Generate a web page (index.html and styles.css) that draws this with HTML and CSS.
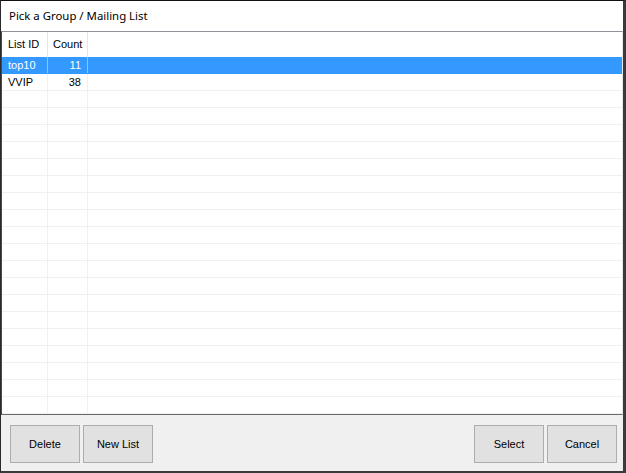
FILE: index.html
```html
<!DOCTYPE html>
<html>
<head>
<meta charset="utf-8">
<link rel="stylesheet" href="styles.css">
</head>
<body>
<div class="window">
  <div class="titlebar">Pick a Group / Mailing List</div>
  <div class="listview">
    <div class="row header">
      <div class="cell c1">List ID</div>
      <div class="cell c2">Count</div>
      <div class="cell c3"></div>
    </div>
    <div class="row selected">
      <div class="cell c1">top10</div>
      <div class="cell c2 num">11</div>
      <div class="cell c3"></div>
    </div>
    <div class="row">
      <div class="cell c1">VVIP</div>
      <div class="cell c2 num">38</div>
      <div class="cell c3"></div>
    </div>
    <div class="row"><div class="cell c1"></div><div class="cell c2"></div><div class="cell c3"></div></div>
    <div class="row"><div class="cell c1"></div><div class="cell c2"></div><div class="cell c3"></div></div>
    <div class="row"><div class="cell c1"></div><div class="cell c2"></div><div class="cell c3"></div></div>
    <div class="row"><div class="cell c1"></div><div class="cell c2"></div><div class="cell c3"></div></div>
    <div class="row"><div class="cell c1"></div><div class="cell c2"></div><div class="cell c3"></div></div>
    <div class="row"><div class="cell c1"></div><div class="cell c2"></div><div class="cell c3"></div></div>
    <div class="row"><div class="cell c1"></div><div class="cell c2"></div><div class="cell c3"></div></div>
    <div class="row"><div class="cell c1"></div><div class="cell c2"></div><div class="cell c3"></div></div>
    <div class="row"><div class="cell c1"></div><div class="cell c2"></div><div class="cell c3"></div></div>
    <div class="row"><div class="cell c1"></div><div class="cell c2"></div><div class="cell c3"></div></div>
    <div class="row"><div class="cell c1"></div><div class="cell c2"></div><div class="cell c3"></div></div>
    <div class="row"><div class="cell c1"></div><div class="cell c2"></div><div class="cell c3"></div></div>
    <div class="row"><div class="cell c1"></div><div class="cell c2"></div><div class="cell c3"></div></div>
    <div class="row"><div class="cell c1"></div><div class="cell c2"></div><div class="cell c3"></div></div>
    <div class="row"><div class="cell c1"></div><div class="cell c2"></div><div class="cell c3"></div></div>
    <div class="row"><div class="cell c1"></div><div class="cell c2"></div><div class="cell c3"></div></div>
    <div class="row"><div class="cell c1"></div><div class="cell c2"></div><div class="cell c3"></div></div>
    <div class="row"><div class="cell c1"></div><div class="cell c2"></div><div class="cell c3"></div></div>
    <div class="row"><div class="cell c1"></div><div class="cell c2"></div><div class="cell c3"></div></div>
    <div class="row"><div class="cell c1"></div><div class="cell c2"></div><div class="cell c3"></div></div>
  </div>
  <div class="panel">
    <div class="group">
      <button class="btn">Delete</button>
      <button class="btn">New List</button>
    </div>
    <div class="group">
      <button class="btn">Select</button>
      <button class="btn">Cancel</button>
    </div>
  </div>
</div>
</body>
</html>
```
FILE: styles.css
```css
html, body {
  margin: 0;
  padding: 0;
  background: #ffffff;
}

.window {
  box-sizing: border-box;
  width: 626px;
  height: 473px;
  border-top: 1px solid #111111;
  border-left: 1px solid #2a2a2a;
  border-right: 3px solid #3a3a3a;
  border-bottom: 2px solid #3a3a3a;
  display: flex;
  flex-direction: column;
  background: #f0f0f0;
  font-family: "Liberation Sans", Arial, sans-serif;
  font-size: 11px;
  color: #000;
}

.titlebar {
  height: 30px;
  flex: none;
  background: #ffffff;
  font-family: "Noto Sans", "Open Sans", sans-serif;
  font-size: 11.4px;
  line-height: 30px;
  padding-left: 8px;
  color: #000;
}

.listview {
  box-sizing: border-box;
  height: 384px;
  flex: none;
  background: #ffffff;
  border-top: 1px solid #8e9399;
  border-left: 1px solid #4a4a4a;
  border-bottom: 1px solid #6a6a6a;
  border-right: 1px solid #e8e8e8;
  overflow: hidden;
}

.row {
  display: flex;
  height: 17px;
  box-sizing: border-box;
  border-bottom: 1px solid #f0f0f0;
}

.row.header {
  height: 25px;
  border-bottom: none;
}

.cell {
  box-sizing: border-box;
  height: 100%;
  line-height: 16px;
  white-space: nowrap;
  overflow: hidden;
}

.header .cell {
  line-height: 25px;
}

.c1 {
  width: 46px;
  padding-left: 6px;
  border-right: 1px solid #f0f0f0;
}

.c2 {
  width: 40px;
  padding-left: 5px;
  border-right: 1px solid #f0f0f0;
}

.header .c1,
.header .c2 {
  border-right-color: #e5e5e5;
}

.c3 {
  flex: 1;
}

.num {
  text-align: right;
  padding-right: 6px;
}

.row.selected {
  background: #3399ff;
  color: #ffffff;
  border-bottom-color: #3399ff;
}

.row.selected .c1,
.row.selected .c2 {
  border-right-color: #8cc3ff;
}

.panel {
  flex: 1;
  display: flex;
  justify-content: space-between;
  padding: 10px 6px 0 9px;
  background: #f0f0f0;
}

.group {
  display: flex;
  gap: 3px;
  align-items: flex-start;
}

.btn {
  box-sizing: border-box;
  width: 70px;
  height: 38px;
  margin: 0;
  padding: 0;
  background: #e1e1e1;
  border: 1px solid #adadad;
  border-radius: 0;
  font-family: "Liberation Sans", Arial, sans-serif;
  font-size: 11px;
  color: #000;
}
```
